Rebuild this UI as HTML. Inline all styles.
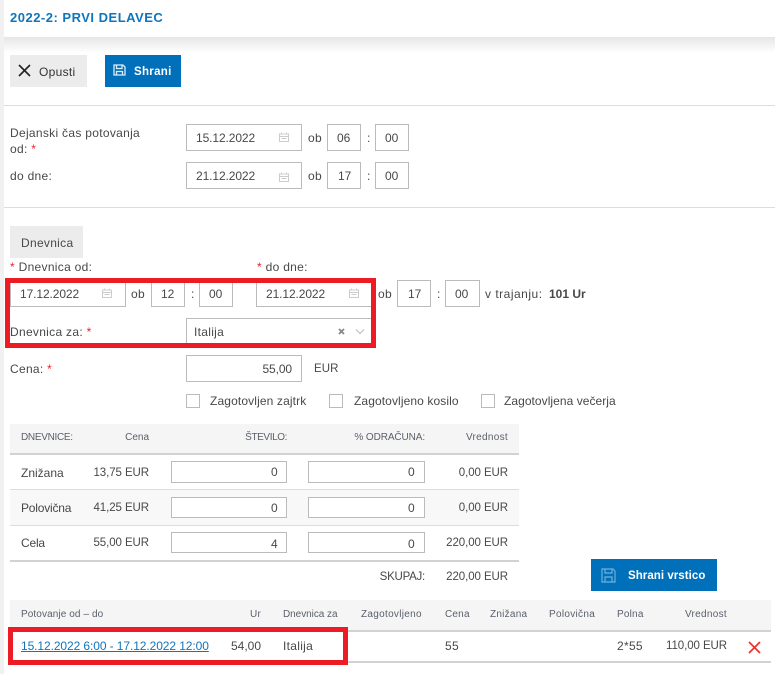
<!DOCTYPE html>
<html><head><meta charset="utf-8">
<style>
html,body{margin:0;padding:0;background:#fff}
#p{position:relative;width:775px;height:674px;overflow:hidden;background:#fff;font-family:"Liberation Sans",sans-serif;font-size:12px;color:#484848}
#p div,#p span.t,#p svg{position:absolute}
.t{white-space:nowrap;line-height:16px;height:16px;letter-spacing:.3px}
.t.n{letter-spacing:-.1px}
.t.m{letter-spacing:-.3px}
.t.c{letter-spacing:-.08px;font-size:11.500px}
.b{box-sizing:border-box;border:1px solid #bbb;background:#fff}
.r{color:#e8232a}
.h{font-size:10px;color:#5a5f6a;letter-spacing:.2px}
.hl{background:#ddd;height:1px}
</style></head><body><div id="p">
<div style="left:0;top:0;width:4px;height:674px;background:#f1f1f1"></div>
<div style="left:4px;top:37px;width:771px;height:16px;background:linear-gradient(#e6e6e6,#fff)"></div>
<span class="t" style="left:10px;top:10px;font-size:13px;font-weight:bold;color:#0f75bc;letter-spacing:.5px">2022-2: PRVI DELAVEC</span>

<div style="left:10px;top:55px;width:77px;height:32px;background:#ececec"></div>
<svg style="left:18px;top:64px" width="13" height="13" viewBox="0 0 13 13"><path d="M1 1L12 12M12 1L1 12" stroke="#222" stroke-width="1.6" fill="none"/></svg>
<span class="t" style="left:39px;top:64px;color:#333">Opusti</span>
<div style="left:105px;top:55px;width:76px;height:32px;background:#0070ba"></div>
<svg style="left:113px;top:64px" width="13" height="12" viewBox="0 0 13 12"><path d="M1 1H10L12 3V11H1ZM3.5 1V4.500H9V1M3.500 11V7.500H9.500V11" stroke="#dcecf7" stroke-width="1.300" fill="none"/></svg>
<span class="t" style="left:134px;top:64px;color:#fff;font-weight:bold;font-size:11.500px">Shrani</span>
<div class="hl" style="left:4px;top:105px;width:771px"></div>

<span class="t" style="left:10px;top:125px">Dejanski čas potovanja</span>
<span class="t" style="left:10px;top:141px">od: <span class="r">*</span></span>
<div class="b" style="left:186px;top:124px;width:116px;height:27px"></div>
<span class="t n" style="left:196px;top:130px">15.12.2022</span>
<svg style="left:279px;top:132px" width="10" height="10" viewBox="0 0 10 10"><path d="M.5 2H9.500V9.500H.5ZM.5 4.500H9.500M2.500 .5V2M7.500 .5V2M2.500 6.500H7.500" stroke="#ccc" fill="none"/></svg>
<span class="t" style="left:308px;top:130px">ob</span>
<div class="b" style="left:327px;top:124px;width:34px;height:27px"></div>
<span class="t n" style="left:337px;top:130px">06</span>
<span class="t" style="left:367px;top:130px">:</span>
<div class="b" style="left:375px;top:124px;width:34px;height:27px"></div>
<span class="t n" style="left:385px;top:130px">00</span>

<span class="t" style="left:10px;top:168px">do dne:</span>
<div class="b" style="left:186px;top:162px;width:116px;height:27px"></div>
<span class="t n" style="left:196px;top:168px">21.12.2022</span>
<svg style="left:279px;top:172px" width="10" height="10" viewBox="0 0 10 10"><path d="M.5 2H9.500V9.500H.5ZM.5 4.500H9.500M2.500 .5V2M7.500 .5V2M2.500 6.500H7.500" stroke="#ccc" fill="none"/></svg>
<span class="t" style="left:308px;top:168px">ob</span>
<div class="b" style="left:327px;top:162px;width:34px;height:27px"></div>
<span class="t n" style="left:338px;top:168px">17</span>
<span class="t" style="left:367px;top:168px">:</span>
<div class="b" style="left:375px;top:162px;width:34px;height:27px"></div>
<span class="t n" style="left:385px;top:168px">00</span>
<div class="hl" style="left:4px;top:207px;width:771px"></div>

<div style="left:10px;top:226px;width:73px;height:32px;background:#ececec"></div>
<span class="t" style="left:21px;top:235px">Dnevnica</span>
<span class="t" style="left:10px;top:259px"><span class="r">*</span> Dnevnica od:</span>
<span class="t" style="left:257px;top:259px"><span class="r">*</span> do dne:</span>

<div class="b" style="left:10px;top:280px;width:116px;height:27px"></div>
<span class="t n" style="left:20px;top:286px">17.12.2022</span>
<svg style="left:102px;top:288px" width="10" height="10" viewBox="0 0 10 10"><path d="M.5 2H9.500V9.500H.5ZM.5 4.500H9.500M2.500 .5V2M7.500 .5V2M2.500 6.500H7.500" stroke="#ccc" fill="none"/></svg>
<span class="t" style="left:131px;top:286px">ob</span>
<div class="b" style="left:151px;top:280px;width:34px;height:27px"></div>
<span class="t n" style="left:161px;top:286px">12</span>
<span class="t" style="left:191px;top:286px">:</span>
<div class="b" style="left:199px;top:280px;width:34px;height:27px"></div>
<span class="t n" style="left:209px;top:286px">00</span>
<div class="b" style="left:256px;top:280px;width:116px;height:27px"></div>
<span class="t n" style="left:266px;top:286px">21.12.2022</span>
<svg style="left:349px;top:288px" width="10" height="10" viewBox="0 0 10 10"><path d="M.5 2H9.500V9.500H.5ZM.5 4.500H9.500M2.500 .5V2M7.500 .5V2M2.500 6.500H7.500" stroke="#ccc" fill="none"/></svg>
<span class="t" style="left:378px;top:286px">ob</span>
<div class="b" style="left:397px;top:280px;width:34px;height:27px"></div>
<span class="t n" style="left:408px;top:286px">17</span>
<span class="t" style="left:437px;top:286px">:</span>
<div class="b" style="left:445px;top:280px;width:35px;height:27px"></div>
<span class="t n" style="left:455px;top:286px">00</span>
<span class="t" style="left:485px;top:286px;letter-spacing:.5px">v trajanju:</span>
<span class="t" style="left:549px;top:286px;font-weight:bold;letter-spacing:0">101 Ur</span>

<span class="t" style="left:10px;top:324px">Dnevnica za: <span class="r">*</span></span>
<div class="b" style="left:186px;top:318px;width:186px;height:27px"></div>
<span class="t" style="left:194px;top:324px">Italija</span>
<svg style="left:338px;top:328px" width="7" height="7" viewBox="0 0 7 7"><path d="M1 1L6 6M6 1L1 6" stroke="#888" stroke-width="1.800" fill="none"/></svg>
<svg style="left:355px;top:328px" width="10" height="7" viewBox="0 0 10 7"><path d="M1 1.500L5 5.500L9 1.500" stroke="#bbb" fill="none"/></svg>
<div style="left:5px;top:278px;width:361px;height:60px;border:5px solid #ed1c24"></div>

<span class="t" style="left:10px;top:361px">Cena: <span class="r">*</span></span>
<div class="b" style="left:186px;top:355px;width:116px;height:27px"></div>
<span class="t n" style="right:483px;top:361px">55,00</span>
<span class="t" style="left:314px;top:361px;font-size:11.500px;letter-spacing:.1px">EUR</span>

<div class="b" style="left:186px;top:394px;width:14px;height:14px"></div>
<span class="t" style="left:210px;top:393px;letter-spacing:.13px">Zagotovljen zajtrk</span>
<div class="b" style="left:329px;top:394px;width:14px;height:14px"></div>
<span class="t" style="left:354px;top:393px;letter-spacing:.1px">Zagotovljeno kosilo</span>
<div class="b" style="left:481px;top:394px;width:14px;height:14px"></div>
<span class="t" style="left:504px;top:393px;letter-spacing:.05px">Zagotovljena večerja</span>

<div style="left:10px;top:424px;width:509px;height:29px;background:#f5f5f5"></div>
<div style="left:10px;top:453px;width:509px;height:2px;background:#d2d2d2"></div>
<span class="t h" style="left:21px;top:430px;letter-spacing:-.3px">DNEVNICE:</span>
<span class="t h" style="right:626px;top:430px;letter-spacing:0">Cena</span>
<span class="t h" style="right:488px;top:430px;letter-spacing:-.4px">ŠTEVILO:</span>
<span class="t h" style="right:350px;top:430px;letter-spacing:-.1px">% ODRAČUNA:</span>
<span class="t h" style="right:267px;top:430px;letter-spacing:.3px">Vrednost</span>

<div style="left:10px;top:489px;width:509px;height:37px;background:#f7f8f7;border-top:1px solid #ddd;border-bottom:1px solid #ddd;box-sizing:border-box"></div>
<div style="left:10px;top:560px;width:509px;height:2px;background:#d2d2d2"></div>

<span class="t" style="left:21px;top:465px;letter-spacing:0">Znižana</span>
<span class="t c" style="right:626px;top:465px">13,75 EUR</span>
<div class="b" style="left:171px;top:461px;width:116px;height:22px"></div>
<span class="t" style="right:497px;top:464px">0</span>
<div class="b" style="left:308px;top:461px;width:117px;height:22px"></div>
<span class="t" style="right:360px;top:464px">0</span>
<span class="t c" style="right:267px;top:465px">0,00 EUR</span>

<span class="t" style="left:21px;top:500px;letter-spacing:-.2px">Polovična</span>
<span class="t c" style="right:626px;top:500px">41,25 EUR</span>
<div class="b" style="left:171px;top:497px;width:116px;height:21px"></div>
<span class="t" style="right:497px;top:500px">0</span>
<div class="b" style="left:308px;top:497px;width:117px;height:21px"></div>
<span class="t" style="right:360px;top:500px">0</span>
<span class="t c" style="right:267px;top:500px">0,00 EUR</span>

<span class="t" style="left:21px;top:535px;letter-spacing:-.2px">Cela</span>
<span class="t c" style="right:626px;top:535px">55,00 EUR</span>
<div class="b" style="left:171px;top:532px;width:116px;height:21px"></div>
<span class="t" style="right:497px;top:536px">4</span>
<div class="b" style="left:308px;top:532px;width:117px;height:21px"></div>
<span class="t" style="right:360px;top:536px">0</span>
<span class="t c" style="right:267px;top:535px">220,00 EUR</span>

<span class="t" style="right:350px;top:569px;font-size:11.500px;letter-spacing:-.25px">SKUPAJ:</span>
<span class="t c" style="right:267px;top:569px">220,00 EUR</span>
<div style="left:591px;top:559px;width:126px;height:32px;background:#0070ba"></div>
<svg style="left:601px;top:568px" width="15" height="15" viewBox="0 0 15 15"><path d="M1 1H12L14 3V14H1ZM4 1V5H11V1M4 14V9H11V14" stroke="#6fb0dc" stroke-width="1.200" fill="none"/></svg>
<span class="t" style="left:628px;top:568px;color:#fff;font-weight:bold;font-size:11.500px;letter-spacing:.05px">Shrani vrstico</span>

<div style="left:10px;top:600px;width:761px;height:30px;background:#f5f5f5"></div>
<div style="left:10px;top:630px;width:761px;height:2px;background:#d2d2d2"></div>
<div style="left:10px;top:661px;width:761px;height:2px;background:#d2d2d2"></div>
<span class="t h" style="left:21px;top:607px;letter-spacing:.1px">Potovanje od – do</span>
<span class="t h" style="right:514px;top:607px">Ur</span>
<span class="t h" style="left:283px;top:607px;letter-spacing:-.05px">Dnevnica za</span>
<span class="t h" style="left:361px;top:607px;letter-spacing:.3px">Zagotovljeno</span>
<span class="t h" style="left:445px;top:607px">Cena</span>
<span class="t h" style="left:490px;top:607px;letter-spacing:.25px">Znižana</span>
<span class="t h" style="left:549px;top:607px;letter-spacing:.3px">Polovična</span>
<span class="t h" style="left:617px;top:607px">Polna</span>
<span class="t h" style="right:48px;top:607px;letter-spacing:.3px">Vrednost</span>
<span class="t" style="left:21px;top:638px;color:#0f75bc;text-decoration:underline;letter-spacing:-.09px">15.12.2022 6:00 - 17.12.2022 12:00</span>
<span class="t" style="right:514px;top:638px;letter-spacing:0">54,00</span>
<span class="t" style="left:283px;top:638px">Italija</span>
<span class="t" style="left:445px;top:638px">55</span>
<span class="t" style="left:617px;top:638px">2*55</span>
<span class="t c" style="right:48px;top:638px">110,00 EUR</span>
<svg style="left:748px;top:641px" width="13" height="13" viewBox="0 0 13 13"><path d="M1 1L12 12M12 1L1 12" stroke="#e8332c" stroke-width="1.700" fill="none"/></svg>
<div style="left:8px;top:627px;width:330px;height:28px;border:5px solid #ed1c24"></div>
</div></body></html>
